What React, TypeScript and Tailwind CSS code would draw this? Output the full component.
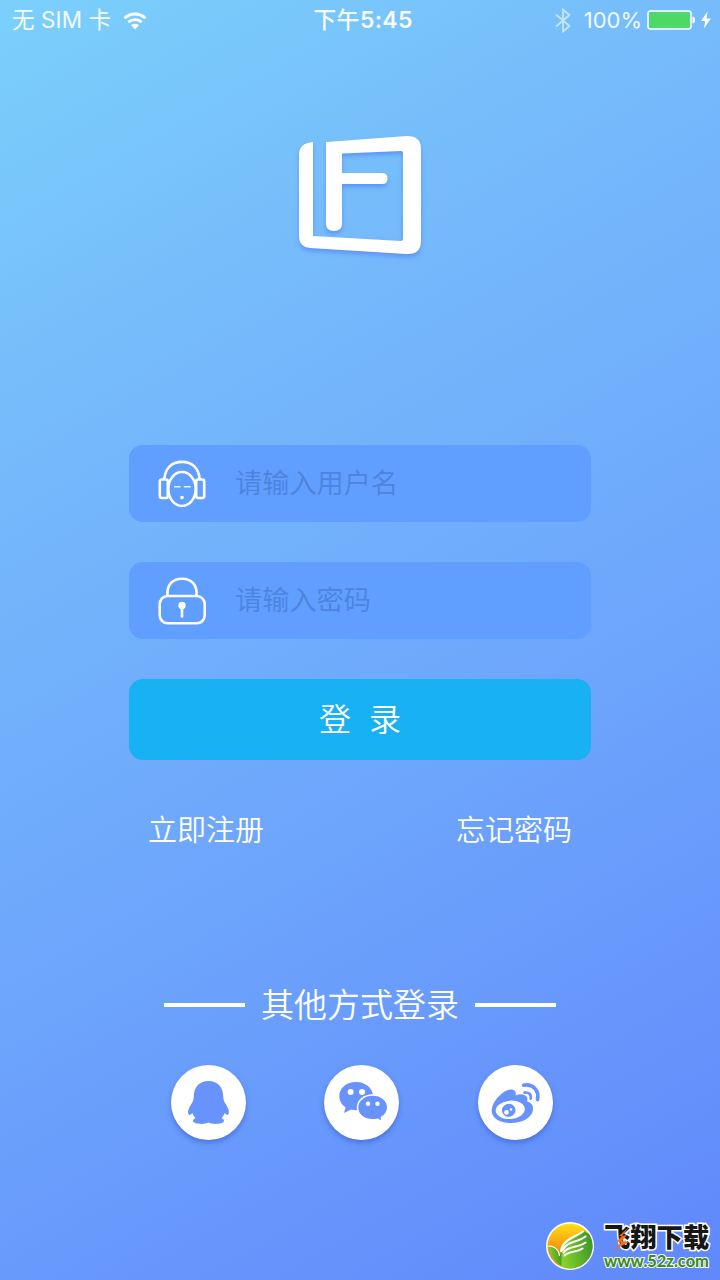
import type { ReactNode } from "react";

function WifiIcon() {
  return (
    <svg width="24" height="19" viewBox="0 0 24 19" fill="none" stroke="white" strokeWidth="2.9">
      <path d="M1.5 7.2C7.5 1.6 16.500 1.6 22.500 7.2" />
      <path d="M5.300 11.2c3.900-3.500 9.500-3.500 13.400 0" />
      <path d="M8 14.2c2.400-1.900 5.600-1.900 8 0l-4 4z" fill="white" stroke="none" />
    </svg>
  );
}

function StatusBar() {
  return (
    <header className="grid h-10 grid-cols-3 items-center text-[22.500px] leading-10 text-white/90">
      <div className="flex items-center pl-[12px] tracking-[0.1px] whitespace-pre">
        <span>无 SIM 卡</span>
        <span className="ml-[12px]"><WifiIcon /></span>
      </div>
      <div className="pl-[6px] text-center text-[23px] font-medium tracking-[0.3px] text-white/95">
        下午<span className="font-semibold">5:45</span>
      </div>
      <div className="flex items-center justify-end pr-2">
        <svg className="mr-[13px] opacity-60" width="16" height="25" viewBox="0 0 16 25" fill="none" stroke="white" strokeWidth="1.7">
          <path d="M1 6.500 14.500 18 8 23.500v-22L14.500 7 1 18.500" />
        </svg>
        <span className="text-[22px]">100%</span>
        <svg className="ml-[5px]" width="65" height="20" viewBox="0 0 65 20">
          <rect x="1" y="1" width="43" height="18" rx="2.5" fill="none" stroke="white" strokeWidth="1.5" />
          <rect x="2.200" y="2.200" width="40.600" height="15.600" rx="1" fill="#4cd964" />
          <path d="M45.500 6.500q2.500 0 2.500 3.500t-2.500 3.500z" fill="white" />
          <path d="M60.500 1.500 54 11h4.200l-1.300 7.500L64 8.500h-4.500z" fill="white" />
        </svg>
      </div>
    </header>
  );
}

function Logo() {
  return (
    <svg className="drop-shadow-[0_3px_2px_rgba(70,110,240,0.5)]" width="124" height="124" viewBox="0 0 124 124">
      <path
        fill="white"
        fillRule="evenodd"
        d="M15 7v94l88 5q2 0 2-2V18q0-2-2-2L44 18.500V38H84q5.500 0 5.500 5.500T84 49H44v40q0 7-8 7t-8-7V7L109 1q14 0 14 13v92q0 14-15 13L12 113Q1 112 1 101V20Q1 8 15 7Z"
      />
    </svg>
  );
}

function HeadIcon() {
  return (
    <svg width="48" height="48" viewBox="0 0 48 48" fill="none" stroke="white" strokeWidth="2.6">
      <path d="M6.300 19.500C7 8 14 1.900 24 1.900S41 8 41.700 19.500" />
      <ellipse cx="24" cy="29" rx="13.700" ry="17" />
      <rect x="1.800" y="19.500" width="8" height="18.500" rx="2" />
      <rect x="38.200" y="19.500" width="8" height="18.500" rx="2" />
      <path d="M16 26.700h6.500M25.800 26.700h7" strokeWidth="1.600" opacity=".85" />
      <circle cx="24" cy="37.500" r="1.800" fill="white" stroke="none" />
    </svg>
  );
}

function LockIcon() {
  return (
    <svg width="48" height="48" viewBox="0 0 48 48" fill="none" stroke="white" strokeWidth="2.6">
      <path d="M9.500 19C8.500 8 14.500 1.700 24 1.700S39.500 8 38.500 19" />
      <rect x="1.700" y="19" width="45" height="27.300" rx="8" />
      <circle cx="24" cy="28.500" r="3.700" fill="white" stroke="none" />
      <path d="M24 29v11.500" />
    </svg>
  );
}

function Field({ icon, type, placeholder }: { icon: ReactNode; type: string; placeholder: string }) {
  return (
    <label className="flex h-[77px] items-center gap-[29px] rounded-[14px] bg-[#609eff] pl-[29px]">
      {icon}
      <input
        type={type}
        placeholder={placeholder}
        className="w-[320px] bg-transparent pt-[2px] text-[27.200px] font-[350] text-white outline-none placeholder:text-[#4e83dd]"
      />
    </label>
  );
}

function QqIcon() {
  return (
    <svg width="75" height="75" viewBox="0 0 75 75" fill="#6893fd">
      <path d="M37.500 16C28 16 23 22.500 22.800 31c0 3-.8 5-1.800 7-2.800 4-4.800 8-3.500 11 .8 2 2.500.5 4-1 .5 2 1.500 3.500 3 5-1.500.8-2.700 1.800-2.500 3 .7 3.500 12.300 3.600 15.500 1.600 3.200 2 14.800 1.900 15.500-1.600.2-1.200-1-2.200-2.500-3 1.500-1.500 2.500-3 3-5 1.500 1.500 3.200 3 4 1 1.300-3-.7-7-3.500-11-1-2-1.800-4-1.800-7C52 22.500 47 16 37.500 16Z" />
    </svg>
  );
}

function WechatIcon() {
  return (
    <svg width="75" height="75" viewBox="0 0 75 75" fill="#6893fd">
      <path d="M32 17C22.500 17 15.300 23 15.300 31.200c0 4.700 2.500 8.500 6.200 11L20 48l7-3.500c2 .5 3.500.7 5.500.7 9.500 0 16.500-6 16.500-14S41.500 17 32 17Z" />
      <path stroke="white" strokeWidth="1.5" d="M48.700 30c-8.700 0-15.200 5.300-15.200 12.500s6.500 12.300 15.200 12.300c1.800 0 3.300-.2 5-.6l4.800 2.600-1.200-4.300c4-2.500 6.400-5.600 6.400-10C63.700 35.300 57.400 30 48.700 30Z" />
      <g fill="white">
        <circle cx="26.600" cy="27" r="3" />
        <circle cx="38" cy="27" r="3" />
        <circle cx="44" cy="38.800" r="2.200" />
        <circle cx="53.500" cy="38.800" r="2.200" />
      </g>
    </svg>
  );
}

function WeiboIcon() {
  return (
    <svg width="75" height="75" viewBox="0 0 75 75" fill="#6893fd">
      <path d="M24.500 28C28.500 24.500 34.500 23 37 26c1 1.500 1 3 .5 4.500C42 28.500 48 29 49.200 33c.4 1.500 0 2.500-.2 3.300 4.500 1.400 6.500 4 6 8.500C54 53 44 58 33 58c-11 0-19.300-4.500-19.300-12.500C13.700 39 19 32.500 24.500 28Z" />
      <ellipse cx="32.300" cy="44.800" rx="14.600" ry="9.200" fill="white" transform="rotate(-5 32.300 44.800)" />
      <ellipse cx="30.700" cy="45.300" rx="6.800" ry="6.500" transform="rotate(-15 30.700 45.300)" />
      <circle cx="28.500" cy="47.300" r="2.400" fill="white" />
      <circle cx="33" cy="44.500" r="1.200" fill="white" />
      <path d="M45.500 20.200C54 18.200 61.500 25 59.500 34.500" fill="none" stroke="#6893fd" strokeWidth="3.700" strokeLinecap="round" />
      <path d="M46.500 27.600c4.300-.7 7 2 6.200 6" fill="none" stroke="#6893fd" strokeWidth="2.700" strokeLinecap="round" />
    </svg>
  );
}

function SocialButton({ label, children }: { label: string; children: ReactNode }) {
  return (
    <button aria-label={label} className="size-[75px] rounded-full bg-white shadow-[0_3px_5px_rgba(50,80,200,0.5)]">
      {children}
    </button>
  );
}

function SiteMark() {
  return (
    <footer className="mt-auto mb-[9px] ml-auto flex items-center gap-[9px] pr-[11px]">
      <svg width="50" height="50" viewBox="0 0 50 50">
        <defs>
          <linearGradient id="sun" x1="0" y1="0" x2="0" y2="1">
            <stop offset="0" stopColor="#ffe01a" />
            <stop offset="0.6" stopColor="#f58f0b" />
          </linearGradient>
          <linearGradient id="leaf" x1="0" y1="0.600" x2="1" y2="0.400">
            <stop offset="0" stopColor="#8fd52f" />
            <stop offset="1" stopColor="#3c9a26" />
          </linearGradient>
        </defs>
        <circle cx="25" cy="25" r="24" fill="white" />
        <circle cx="25" cy="25" r="22.500" fill="url(#sun)" />
        <path d="M16 30C17 18 28 17 39 10l5.500 3.500A22.500 22.500 0 0 1 14 44.500Z" fill="url(#leaf)" />
        <path d="M3 25q7 0 10 5 1 2 1.500 5l2-6 0 16Q6 39 3 25Z" fill="url(#leaf)" />
        <path d="M3 25q7 0 10 5 1 2 1.500 5" fill="none" stroke="white" strokeWidth="1.200" />
        <g fill="none" stroke="white" strokeWidth="2.100" strokeLinecap="round">
          <path d="M16 30C18 18 29 17 38 10.500" />
          <path d="M17.500 29C22 20 32 22 40.500 15.500" />
          <path d="M18.500 31.500C23 25 33 27 40.500 21.500" />
          <path d="M19.500 34.500C24 29.500 31 32 37.500 27.500" />
        </g>
      </svg>
      <div className="w-[105px]">
        <div className="relative h-[27px] text-[26.300px] leading-[27px] font-black whitespace-nowrap text-[#161616] [-webkit-text-stroke:3px_white] [paint-order:stroke_fill]">
          飞翔下载
          <svg className="absolute top-[2px] left-[7px]" width="22" height="26" viewBox="0 0 22 26">
            <path d="M18 1 11 10l5-1-5 6 7 1L1 25l9-8-4-2 5-5-3 0Z" fill="#f36b16" stroke="none" />
          </svg>
        </div>
        <div className="h-[18px] pt-px font-['Lato'] text-[16.400px] leading-[17px] font-black whitespace-nowrap text-[#3d8d1c] [-webkit-text-stroke:2px_white] [paint-order:stroke_fill]">
          www.52z.com
        </div>
      </div>
    </footer>
  );
}

export default function App() {
  return (
    <main className="flex h-[1280px] w-[720px] flex-col overflow-hidden bg-[linear-gradient(150deg,#7bd0fb_0%,#75b9fb_28%,#6da5fc_60%,#6088fb_100%)] font-['Inter','Noto_Sans_CJK_SC',sans-serif]">
      <StatusBar />
      <div className="mt-[95px] flex justify-center"><Logo /></div>
      <form className="mx-auto mt-[186px] flex w-[462px] flex-col gap-10">
        <Field icon={<HeadIcon />} type="text" placeholder="请输入用户名" />
        <Field icon={<LockIcon />} type="password" placeholder="请输入密码" />
        <button type="button" className="h-[81px] rounded-[14px] bg-[#18b1f4] pt-px text-[32px] font-[350] whitespace-pre text-white">
          登<span className="inline-block w-[18px]" />录
        </button>
      </form>
      <nav className="mx-[148px] mt-[51px] flex h-10 items-center justify-between text-[29px] leading-10 font-[350] text-white">
        <a>立即注册</a>
        <a>忘记密码</a>
      </nav>
      <section className="mt-[133px]">
        <div className="flex h-[42px] items-center justify-center gap-4 text-[33px] leading-[42px] font-[350] text-white">
          <span className="h-1 w-[81px] bg-white" />
          <h2>其他方式登录</h2>
          <span className="h-1 w-[81px] bg-white" />
        </div>
        <div className="mt-[39px] flex justify-center gap-[78.500px] pl-[3px]">
          <SocialButton label="QQ"><QqIcon /></SocialButton>
          <SocialButton label="微信"><WechatIcon /></SocialButton>
          <SocialButton label="微博"><WeiboIcon /></SocialButton>
        </div>
      </section>
      <SiteMark />
    </main>
  );
}
